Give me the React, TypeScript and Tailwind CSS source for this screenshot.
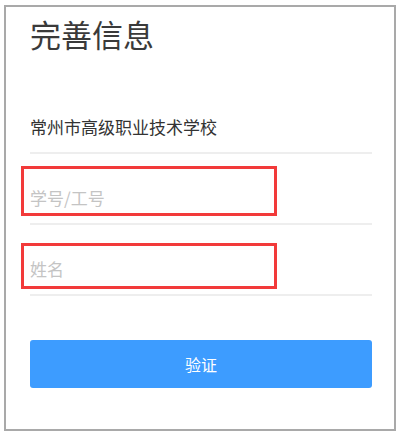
import React from "react";

const font = { fontFamily: '"Noto Sans CJK SC", "Noto Sans", sans-serif' };

export default function App() {
  return (
    <div className="relative w-[402px] h-[439px] bg-white overflow-hidden" style={font}>
      <div className="ml-[4px] mt-[5px] w-[392px] h-[426px] border-2 border-[#a9a9a9] bg-white pl-[24px] pr-[22px]">
        <div className="mt-[12px] h-[30px] leading-[30px] text-[31px] text-[#3a3a3a] mb-[34px]">完善信息</div>
        <div className="h-[71px] pt-[18px] flex items-center border-b-2 border-[#eeeeee] text-[17px] leading-[18px] text-[#333333]">
          常州市高级职业技术学校
        </div>
        <div className="h-[71px] pt-[18px] flex items-center border-b-2 border-[#eeeeee] text-[17px] leading-[18px] text-[#c4c4c4]">
          学号/工号
        </div>
        <div className="h-[71px] pt-[18px] flex items-center border-b-2 border-[#eeeeee] text-[17px] leading-[18px] text-[#c4c4c4]">
          姓名
        </div>
        <button className="mt-[44px] w-full h-[48px] rounded-[3px] bg-[#3d9cff] text-white text-[16px] flex items-center justify-center">
          验证
        </button>
      </div>
      <div className="absolute left-[21px] top-[166px] w-[256px] h-[50px] border-[3px] border-[#f23a3a]" />
      <div className="absolute left-[21px] top-[243px] w-[256px] h-[46px] border-[3px] border-[#f23a3a]" />
    </div>
  );
}
